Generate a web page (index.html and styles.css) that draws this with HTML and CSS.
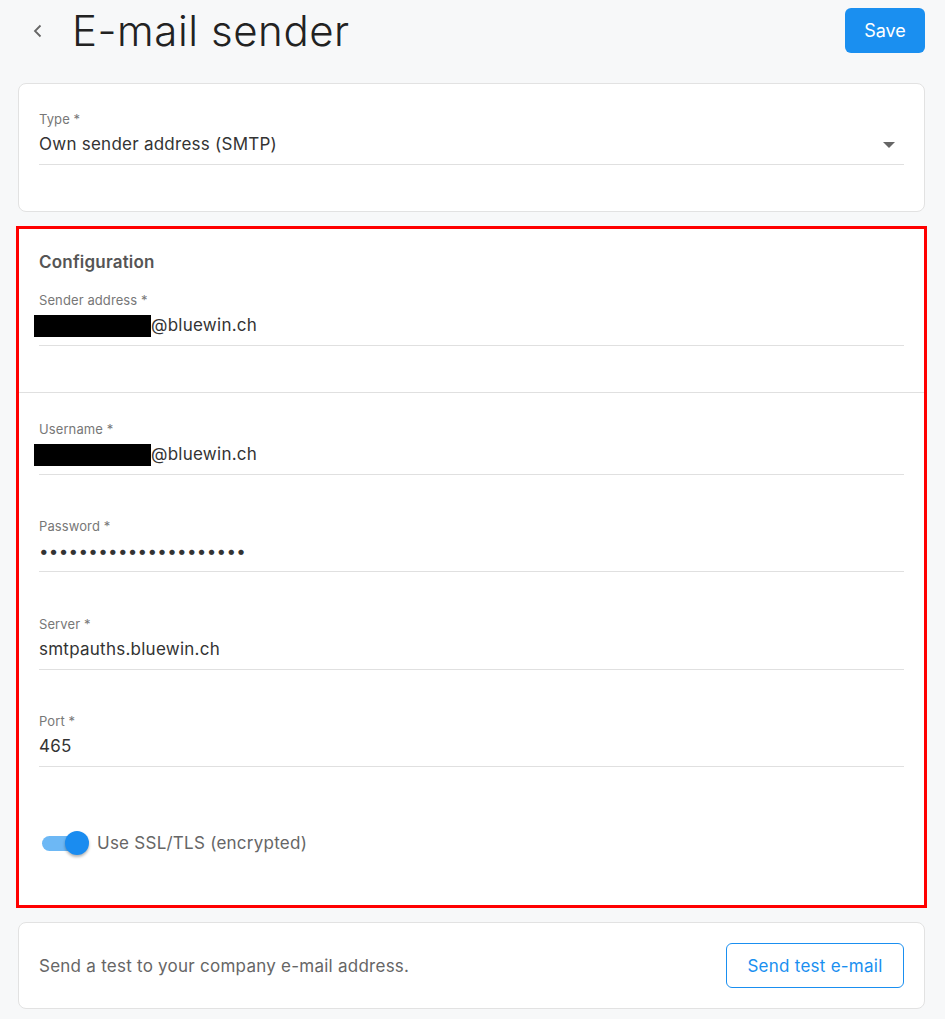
FILE: index.html
```html
<!DOCTYPE html>
<html lang="en">
<head>
    <meta charset="utf-8">
    <title>E-mail sender</title>
    <link rel="stylesheet" href="styles.css">
</head>
<body>
    <div class="page">
        <div class="top">
            <a class="back" href="#">
                <svg width="12" height="14" viewBox="0 0 12 14"><path d="M8.5 1.5 L3 7 L8.5 12.5" fill="none" stroke="#666" stroke-width="1.8"/></svg>
            </a>
            <h1>E-mail sender</h1>
            <button class="btn-save">Save</button>
        </div>

        <div class="card">
            <div class="sect">
                <div class="field">
                    <label>Type *</label>
                    <div class="val">Own sender address (SMTP)<span class="caret"></span></div>
                </div>
            </div>
        </div>

        <div class="card mark">
            <div class="sect first">
                <h3>Configuration</h3>
                <div class="field">
                    <label>Sender address *</label>
                    <div class="val"><span class="redact"></span>@bluewin.ch</div>
                </div>
            </div>
            <div class="sect line">
                <div class="field">
                    <label>Username *</label>
                    <div class="val"><span class="redact"></span>@bluewin.ch</div>
                </div>
                <div class="field">
                    <label>Password *</label>
                    <div class="val dots">•••••••••••••••••••••</div>
                </div>
                <div class="field loose">
                    <label>Server *</label>
                    <div class="val">smtpauths.bluewin.ch</div>
                </div>
                <div class="field">
                    <label>Port *</label>
                    <div class="val">465</div>
                </div>
                <div class="switch-row">
                    <span class="switch"><span class="track"></span><span class="thumb"></span></span>
                    <span class="switch-txt">Use SSL/TLS (encrypted)</span>
                </div>
            </div>
        </div>

        <div class="card test">
            <span>Send a test to your company e-mail address.</span>
            <button class="btn-line">Send test e-mail</button>
        </div>
    </div>
</body>
</html>
```

FILE: styles.css
```css
html, body { margin: 0; padding: 0; }
body { background: #f7f8f9; font-family: Inter, "Noto Sans", "Liberation Sans", sans-serif; color: #333; }
.page { padding: 0 20px 12px 18px; }

.top { display: flex; align-items: center; height: 61px; margin-bottom: 22px; }
.top .back { display: flex; width: 14px; margin-left: 14px; margin-right: 26px; }
.top h1 { flex: 1; margin: 0; font-size: 42px; font-weight: 300; color: #222; letter-spacing: 0.55px; }
.btn-save { width: 80px; height: 45px; margin-top: 0; border: 0; border-radius: 6px; background: #1a8ff0; color: #fff; font-family: inherit; font-size: 18px; }

.card { background: #fff; border: 1px solid #e2e2e2; border-radius: 8px; margin-bottom: 16px; }
.card.mark { outline: 3px solid #ff0000; outline-offset: -1px; border-radius: 0; margin-bottom: 16px; }

.sect { padding: 27px 20px 46px 20px; }
.sect.first { padding-top: 21px; }
.sect.line { border-top: 1px solid #e0e0e0; padding-top: 28px; padding-bottom: 43px; }
.sect h3 { margin: 0 0 18px 0; font-size: 17px; line-height: 24px; font-weight: 600; color: #555; letter-spacing: 0.2px; }

.field { border-bottom: 1px solid #e0e0e0; padding-bottom: 8px; position: relative; }
.field + .field { margin-top: 43px; }
.field.loose { margin-top: 44px; }
.field label { display: block; font-size: 13px; line-height: 16px; color: #777; letter-spacing: 0.1px; }
.field .val { margin-top: 5px; font-size: 17px; line-height: 24px; color: #333; letter-spacing: 0.25px; }
.val .redact { display: inline-block; width: 117px; height: 22px; background: #000; margin-left: -5px; vertical-align: -6px; }
.val.dots { letter-spacing: 0.3px; }
.caret { position: absolute; right: 9px; top: 31px; width: 0; height: 0; border-left: 6px solid transparent; border-right: 6px solid transparent; border-top: 6px solid #666; }

.switch-row { display: flex; align-items: center; height: 38px; margin-top: 57px; }
.switch { position: relative; width: 52px; height: 38px; margin-left: 0; margin-right: 6px; }
.switch .track { position: absolute; left: 3px; top: 12px; width: 38px; height: 15px; border-radius: 8px; background: #6db8f5; }
.switch .thumb { position: absolute; left: 26px; top: 7px; width: 24px; height: 24px; border-radius: 50%; background: #1a8cf0; box-shadow: 0 2px 3px rgba(0,0,0,0.3); }
.switch-txt { font-size: 17px; color: #666; letter-spacing: 0.25px; }

.card.test { display: flex; align-items: center; justify-content: space-between; padding: 20px; font-size: 17px; color: #666; letter-spacing: 0.25px; }
.btn-line { width: 178px; height: 45px; border: 1px solid #1a8ff0; border-radius: 6px; background: #fff; color: #1a8ff0; font-family: inherit; font-size: 17px; letter-spacing: 0.25px; }
```
